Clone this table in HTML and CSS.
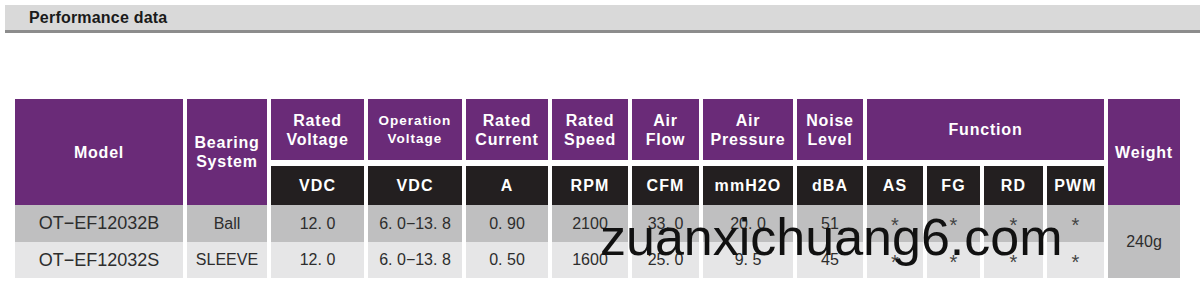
FILE: index.html
```html
<!DOCTYPE html>
<html lang="en">
<head>
<meta charset="utf-8">
<title>Performance data</title>
<link rel="stylesheet" href="styles.css">
</head>
<body>
<div class="page">
  <div class="section-bar"><span class="section-title">Performance data</span></div>

  <div class="spec-table">
    <div class="hd tall">Model</div>
    <div class="hd tall">Bearing<br>System</div>
    <div class="hd">Rated<br>Voltage</div>
    <div class="hd small">Operation<br>Voltage</div>
    <div class="hd">Rated<br>Current</div>
    <div class="hd">Rated<br>Speed</div>
    <div class="hd">Air<br>Flow</div>
    <div class="hd">Air<br>Pressure</div>
    <div class="hd">Noise<br>Level</div>
    <div class="hd func">Function</div>
    <div class="hd tall">Weight</div>

    <div class="unit">VDC</div>
    <div class="unit">VDC</div>
    <div class="unit">A</div>
    <div class="unit">RPM</div>
    <div class="unit">CFM</div>
    <div class="unit">mmH2O</div>
    <div class="unit">dBA</div>
    <div class="unit">AS</div>
    <div class="unit">FG</div>
    <div class="unit">RD</div>
    <div class="unit">PWM</div>

    <div class="cell r1 model">OT−EF12032B</div>
    <div class="cell r1 text">Ball</div>
    <div class="cell r1">12. 0</div>
    <div class="cell r1">6. 0−13. 8</div>
    <div class="cell r1">0. 90</div>
    <div class="cell r1">2100</div>
    <div class="cell r1">33. 0</div>
    <div class="cell r1">20. 0</div>
    <div class="cell r1">51</div>
    <div class="cell r1 star">*</div>
    <div class="cell r1 star">*</div>
    <div class="cell r1 star">*</div>
    <div class="cell r1 star">*</div>
    <div class="cell r1 weight">240g</div>

    <div class="cell r2 model">OT−EF12032S</div>
    <div class="cell r2 text">SLEEVE</div>
    <div class="cell r2">12. 0</div>
    <div class="cell r2">6. 0−13. 8</div>
    <div class="cell r2">0. 50</div>
    <div class="cell r2">1600</div>
    <div class="cell r2">25. 0</div>
    <div class="cell r2">9. 5</div>
    <div class="cell r2">45</div>
    <div class="cell r2 star">*</div>
    <div class="cell r2 star">*</div>
    <div class="cell r2 star">*</div>
    <div class="cell r2 star">*</div>
  </div>

  <div class="watermark">zuanxichuang6.com</div>
</div>
</body>
</html>
```

FILE: styles.css
```css
* { box-sizing: border-box; }

html, body {
  margin: 0;
  padding: 0;
  background: #ffffff;
}

.page {
  position: relative;
  width: 1200px;
  height: 285px;
  overflow: hidden;
  font-family: "Liberation Sans", Arial, sans-serif;
}

.section-bar {
  margin: 5px 0 0 5px;
  height: 28px;
  background: #d9d9d9;
  border-bottom: 3px solid #8c8c8c;
  display: flex;
  align-items: center;
  padding-left: 24px;
}

.section-title {
  font-size: 16px;
  font-weight: bold;
  color: #1a1a1a;
  letter-spacing: 0.2px;
}

.spec-table {
  margin: 66px 0 0 15px;
  display: grid;
  grid-template-columns: 168px 80px 93px 94px 82px 76px 67px 90px 66px 56px 53px 59px 57px 72px;
  grid-template-rows: 61px 45px 37px 36px;
  column-gap: 4px;
  row-gap: 0;
}

.hd {
  background: #6a2b78;
  color: #ffffff;
  font-weight: bold;
  font-size: 16px;
  letter-spacing: 0.8px;
  line-height: 19px;
  display: flex;
  align-items: center;
  justify-content: center;
  text-align: center;
}

.hd.tall {
  grid-row: span 2;
}

.hd.small {
  font-size: 13.5px;
  letter-spacing: 1px;
  line-height: 18px;
}

.hd.func {
  grid-column: span 4;
}

.unit {
  margin-top: 6px;
  background: #231f20;
  color: #ffffff;
  font-weight: bold;
  font-size: 16px;
  letter-spacing: 1.1px;
  display: flex;
  align-items: center;
  justify-content: center;
}

.cell {
  display: flex;
  align-items: center;
  justify-content: center;
  font-size: 16px;
  color: #2d2d2d;
}

.r1 { background: #bfbfc0; }
.r2 { background: #e6e6e7; }

.cell.model {
  font-size: 18px;
}

.cell.text {
  font-size: 16px;
}

.cell.star {
  font-size: 20px;
  color: #444444;
  align-items: flex-start;
  padding-top: 9px;
}

.cell.weight {
  grid-row: span 2;
  background: #bfbfc0;
}

.watermark {
  position: absolute;
  left: 600px;
  top: 211px;
  font-family: "Liberation Sans", Arial, sans-serif;
  font-size: 52px;
  line-height: 1;
  color: #111111;
  white-space: nowrap;
}
```
